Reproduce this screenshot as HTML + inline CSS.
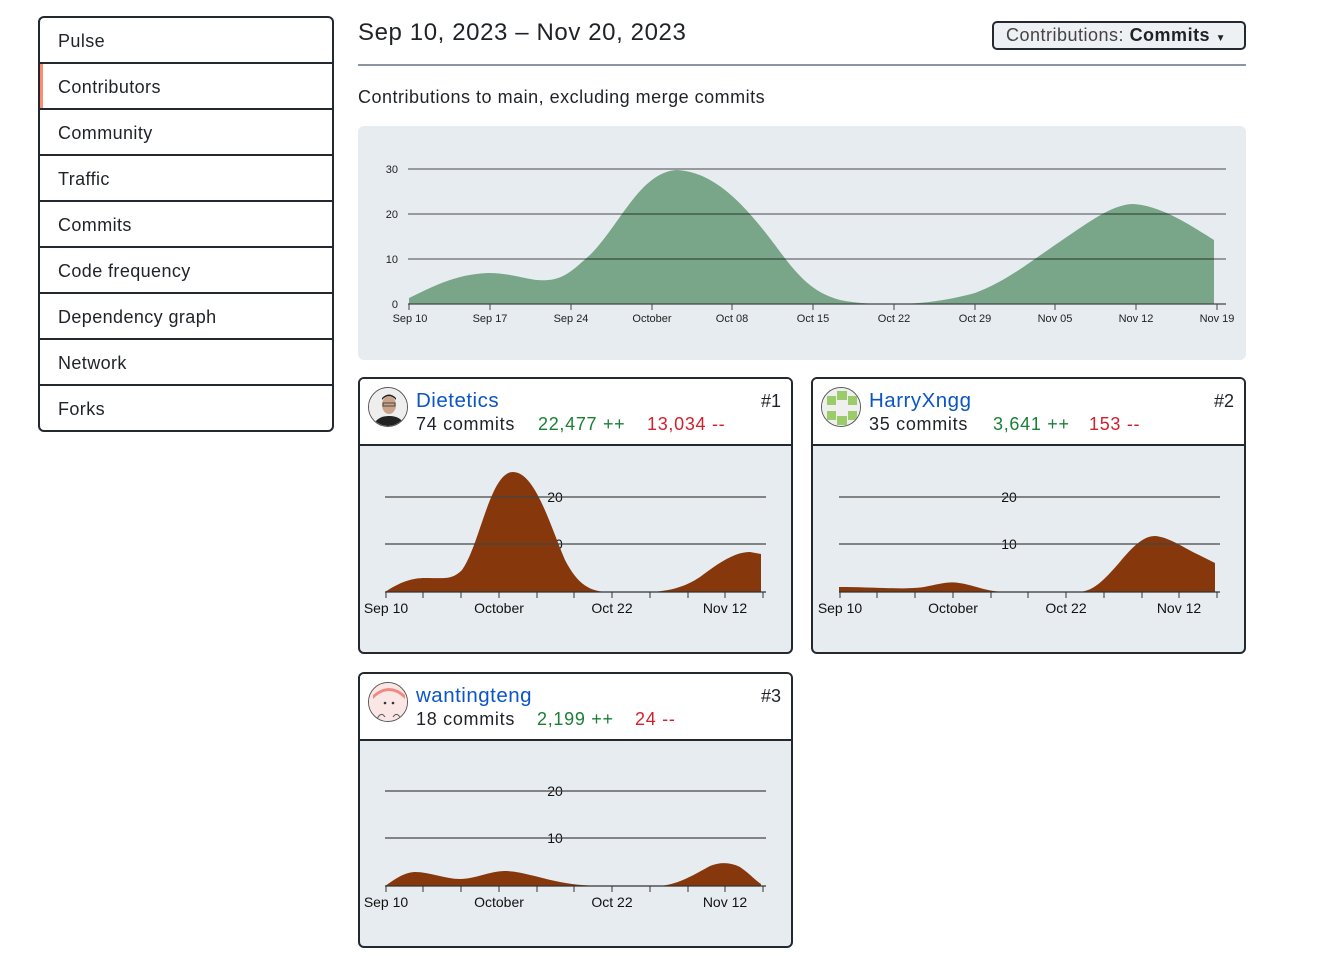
<!DOCTYPE html>
<html><head><meta charset="utf-8"><style>
*{box-sizing:border-box;margin:0;padding:0}
body{width:1326px;height:974px;background:#fff;font-family:"Liberation Sans",sans-serif;color:#1f2328;position:relative;overflow:hidden}
.side{position:absolute;left:38px;top:16px;width:296px;height:416px;border:2px solid #24292f;border-radius:6px;overflow:hidden}
.side div{height:46px;border-bottom:2px solid #24292f;padding-left:18px;line-height:46px;font-size:18px;letter-spacing:0.4px}
.side div:last-child{border-bottom:none}
.side .act{box-shadow:inset 3px 0 0 #fd8c73}
.abs{position:absolute}
.card{position:absolute;border:2px solid #24292f;border-radius:6px;background:#e7ecf0;overflow:hidden}
.card .hd{height:67px;background:#fff;border-bottom:2px solid #24292f;position:relative}
.av{position:absolute;left:8px;top:8px;width:40px;height:40px;border-radius:50%;border:1px solid #555;overflow:hidden}
.nm{position:absolute;left:56px;top:10px;font-size:20.5px;color:#0b55c7;letter-spacing:0.5px}
.st{position:absolute;top:35px;font-size:18px;letter-spacing:0.7px;white-space:pre}
.g{color:#1a7f37}.r{color:#cf222e}
.rk{position:absolute;right:10px;top:12px;font-size:18px}
</style></head><body>
<div class="side">
<div>Pulse</div><div class="act">Contributors</div><div>Community</div><div>Traffic</div><div>Commits</div><div>Code frequency</div><div>Dependency graph</div><div>Network</div><div>Forks</div>
</div>
<div class="abs" style="left:358px;top:19px;font-size:24px;letter-spacing:0.6px">Sep 10, 2023 – Nov 20, 2023</div>
<div class="abs" style="left:992px;top:21px;width:254px;height:29px;border:2px solid #24292f;border-radius:5px;background:#eef1f4;font-size:18px;line-height:25px;padding-left:12px;color:#444;letter-spacing:0.5px;white-space:nowrap">Contributions: <b style="color:#1f2328;font-weight:600">Commits</b> <span style="font-size:10px;color:#1f2328">▼</span></div>
<div class="abs" style="left:358px;top:64px;width:888px;height:2px;background:#8c959f"></div>
<div class="abs" style="left:358px;top:87px;font-size:18px;letter-spacing:0.5px">Contributions to main, excluding merge commits</div>
<div class="abs" style="left:358px;top:126px;width:888px;height:234px;background:#e7ecf0;border-radius:6px"></div>

<div class="card" style="left:358px;top:377px;width:435px;height:277px"><div class="hd">
<div class="av" style="background:#e8e8e8"><svg width="40" height="40"><rect width="40" height="40" fill="#eee"/><ellipse cx="20" cy="17" rx="7" ry="9" fill="#c9a48a"/><path d="M13 12 Q20 4 27 12 L27 10 Q20 3 13 10Z" fill="#222"/><path d="M4 40 Q6 28 20 28 Q34 28 36 40Z" fill="#222"/><rect x="14" y="15" width="12" height="3" fill="none" stroke="#333" stroke-width="0.8"/></svg></div>
<div class="nm">Dietetics</div><div class="st" style="left:56px">74 commits</div><div class="st g" style="left:178px">22,477 ++</div><div class="st r" style="left:287px">13,034 --</div><div class="rk">#1</div></div></div>

<div class="card" style="left:811px;top:377px;width:435px;height:277px"><div class="hd">
<div class="av"><svg width="40" height="40"><rect width="40" height="40" fill="#efefef"/><g fill="#9ccb6c"><rect x="5" y="8" width="9" height="9"/><rect x="26" y="8" width="9" height="9"/><rect x="5" y="23" width="9" height="9"/><rect x="26" y="23" width="9" height="9"/><rect x="15" y="3" width="10" height="9"/><rect x="15" y="28" width="10" height="9"/></g></svg></div>
<div class="nm">HarryXngg</div><div class="st" style="left:56px">35 commits</div><div class="st g" style="left:180px">3,641 ++</div><div class="st r" style="left:276px">153 --</div><div class="rk">#2</div></div></div>

<div class="card" style="left:358px;top:672px;width:435px;height:276px"><div class="hd">
<div class="av"><svg width="40" height="40"><rect width="40" height="40" fill="#fbe6e6"/><path d="M4 16 Q20 0 36 16 L36 12 Q20 -2 4 12Z" fill="#f08a80"/><circle cx="16" cy="20" r="1.3" fill="#333"/><circle cx="24" cy="20" r="1.3" fill="#333"/><path d="M8 36 Q12 28 16 34 M24 34 Q28 28 32 36" fill="none" stroke="#555" stroke-width="1"/></svg></div>
<div class="nm">wantingteng</div><div class="st" style="left:56px">18 commits</div><div class="st g" style="left:177px">2,199 ++</div><div class="st r" style="left:275px">24 --</div><div class="rk">#3</div></div></div>

<svg class="abs" style="left:0;top:0" width="1326" height="974" font-family="Liberation Sans, sans-serif">
<path d="M409 304 L409 298 C430 288 455 274 488 273 C515 273 530 282 548 280 C565 279 575 268 590 255 C620 225 640 172 677 170 C715 172 745 205 775 245 C795 272 810 292 840 300 C860 304 880 304 894 304 C920 304 945 301 975 293 C1005 282 1030 262 1055 245 C1085 225 1110 205 1132 204 C1160 205 1190 225 1214 240 L1214 304Z" fill="#79a688"/>
<g stroke="rgba(0,0,0,0.55)" stroke-width="1.2"><line x1="408" y1="169" x2="1226" y2="169"/><line x1="408" y1="214" x2="1226" y2="214"/><line x1="408" y1="259" x2="1226" y2="259"/></g>
<line x1="408" y1="304" x2="1226" y2="304" stroke="#444" stroke-width="1.2"/>
<g stroke="#444"><line x1="409" y1="304" x2="409" y2="310"/><line x1="490" y1="304" x2="490" y2="310"/><line x1="571" y1="304" x2="571" y2="310"/><line x1="652" y1="304" x2="652" y2="310"/><line x1="732" y1="304" x2="732" y2="310"/><line x1="813" y1="304" x2="813" y2="310"/><line x1="894" y1="304" x2="894" y2="310"/><line x1="975" y1="304" x2="975" y2="310"/><line x1="1055" y1="304" x2="1055" y2="310"/><line x1="1136" y1="304" x2="1136" y2="310"/><line x1="1217" y1="304" x2="1217" y2="310"/></g>
<g font-size="11" fill="#222" text-anchor="end"><text x="398" y="173">30</text><text x="398" y="218">20</text><text x="398" y="263">10</text><text x="398" y="308">0</text></g>
<g font-size="11" fill="#222" text-anchor="middle"><text x="410" y="322">Sep 10</text><text x="490" y="322">Sep 17</text><text x="571" y="322">Sep 24</text><text x="652" y="322">October</text><text x="732" y="322">Oct 08</text><text x="813" y="322">Oct 15</text><text x="894" y="322">Oct 22</text><text x="975" y="322">Oct 29</text><text x="1055" y="322">Nov 05</text><text x="1136" y="322">Nov 12</text><text x="1217" y="322">Nov 19</text></g>

<g>
<text x="555" y="502" font-size="14" text-anchor="middle" fill="#111">20</text><text x="555" y="549" font-size="14" text-anchor="middle" fill="#111">10</text>
<path d="M385 592 C400 582 412 578 425 578 C445 578 452 580 462 570 C480 545 490 472 513 472 C535 472 550 525 565 560 C578 585 590 592 610 592 L650 592 C670 591 685 587 700 577 C720 562 735 552 750 552 L761 554 L761 592Z" fill="#86380c"/>
<g stroke="#444" stroke-width="1.3"><line x1="385" y1="497" x2="766" y2="497"/><line x1="385" y1="544" x2="766" y2="544"/></g>
<line x1="385" y1="592" x2="766" y2="592" stroke="#333" stroke-width="1.3"/>
<g stroke="#333"><line x1="386" y1="592" x2="386" y2="598"/><line x1="423" y1="592" x2="423" y2="598"/><line x1="461" y1="592" x2="461" y2="598"/><line x1="499" y1="592" x2="499" y2="598"/><line x1="537" y1="592" x2="537" y2="598"/><line x1="574" y1="592" x2="574" y2="598"/><line x1="612" y1="592" x2="612" y2="598"/><line x1="650" y1="592" x2="650" y2="598"/><line x1="688" y1="592" x2="688" y2="598"/><line x1="725" y1="592" x2="725" y2="598"/><line x1="763" y1="592" x2="763" y2="598"/></g>
<g font-size="14" text-anchor="middle" fill="#111"><text x="386" y="613">Sep 10</text><text x="499" y="613">October</text><text x="612" y="613">Oct 22</text><text x="725" y="613">Nov 12</text></g>
</g>
<g transform="translate(454,0)">
<text x="555" y="502" font-size="14" text-anchor="middle" fill="#111">20</text><text x="555" y="549" font-size="14" text-anchor="middle" fill="#111">10</text>
<path d="M385 592 L385 587 C420 587 450 590 470 587 C485 584 495 581 505 583 C520 585 530 591 550 592 L625 592 C640 591 650 580 665 563 C680 545 690 536 701 536 C715 537 730 548 745 555 L761 563 L761 592Z" fill="#86380c"/>
<g stroke="#444" stroke-width="1.3"><line x1="385" y1="497" x2="766" y2="497"/><line x1="385" y1="544" x2="766" y2="544"/></g>
<line x1="385" y1="592" x2="766" y2="592" stroke="#333" stroke-width="1.3"/>
<g stroke="#333"><line x1="386" y1="592" x2="386" y2="598"/><line x1="423" y1="592" x2="423" y2="598"/><line x1="461" y1="592" x2="461" y2="598"/><line x1="499" y1="592" x2="499" y2="598"/><line x1="537" y1="592" x2="537" y2="598"/><line x1="574" y1="592" x2="574" y2="598"/><line x1="612" y1="592" x2="612" y2="598"/><line x1="650" y1="592" x2="650" y2="598"/><line x1="688" y1="592" x2="688" y2="598"/><line x1="725" y1="592" x2="725" y2="598"/><line x1="763" y1="592" x2="763" y2="598"/></g>
<g font-size="14" text-anchor="middle" fill="#111"><text x="386" y="613">Sep 10</text><text x="499" y="613">October</text><text x="612" y="613">Oct 22</text><text x="725" y="613">Nov 12</text></g>
</g>
<g transform="translate(0,294)">
<text x="555" y="502" font-size="14" text-anchor="middle" fill="#111">20</text><text x="555" y="549" font-size="14" text-anchor="middle" fill="#111">10</text>
<path d="M385 592 C395 585 405 578 415 578 C430 578 445 585 460 585 C475 585 490 577 505 577 C520 577 540 584 560 588 C575 591 590 592 610 592 L660 592 C680 590 695 580 710 572 C720 568 730 568 740 573 C750 580 755 586 761 590 L761 592Z" fill="#86380c"/>
<g stroke="#444" stroke-width="1.3"><line x1="385" y1="497" x2="766" y2="497"/><line x1="385" y1="544" x2="766" y2="544"/></g>
<line x1="385" y1="592" x2="766" y2="592" stroke="#333" stroke-width="1.3"/>
<g stroke="#333"><line x1="386" y1="592" x2="386" y2="598"/><line x1="423" y1="592" x2="423" y2="598"/><line x1="461" y1="592" x2="461" y2="598"/><line x1="499" y1="592" x2="499" y2="598"/><line x1="537" y1="592" x2="537" y2="598"/><line x1="574" y1="592" x2="574" y2="598"/><line x1="612" y1="592" x2="612" y2="598"/><line x1="650" y1="592" x2="650" y2="598"/><line x1="688" y1="592" x2="688" y2="598"/><line x1="725" y1="592" x2="725" y2="598"/><line x1="763" y1="592" x2="763" y2="598"/></g>
<g font-size="14" text-anchor="middle" fill="#111"><text x="386" y="613">Sep 10</text><text x="499" y="613">October</text><text x="612" y="613">Oct 22</text><text x="725" y="613">Nov 12</text></g>
</g>
</svg>
</body></html>
